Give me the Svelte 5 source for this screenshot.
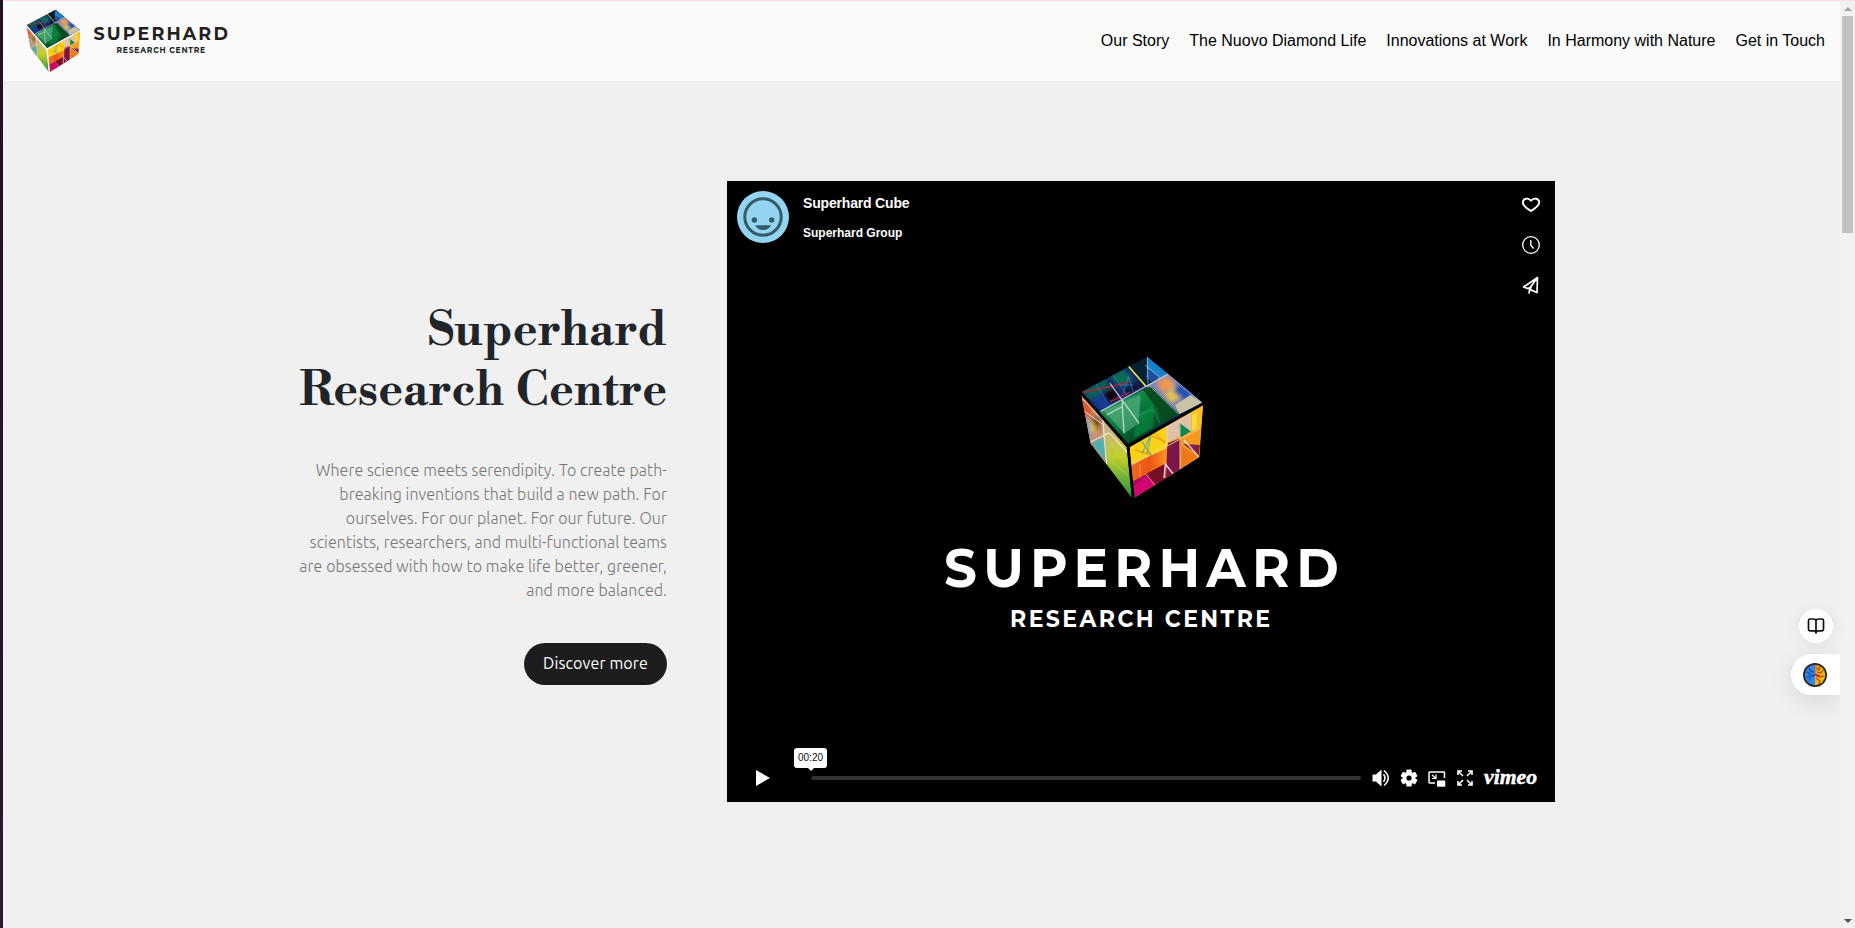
<script>
  const links = ['Our Story', 'The Nuovo Diamond Life', 'Innovations at Work', 'In Harmony with Nature', 'Get in Touch'];
  const heading = ['Superhard', 'Research Centre'];
  const intro = [
    'Where science meets serendipity. To create path-',
    'breaking inventions that build a new path. For',
    'ourselves. For our planet. For our future. Our',
    'scientists, researchers, and multi-functional teams',
    'are obsessed with how to make life better, greener,',
    'and more balanced.'
  ];
</script>

{#snippet cube(id, edge)}
  <defs>
    <clipPath id="{id}-top"><path d="M262 50 428 188 204 312 64 156Z" /></clipPath>
    <clipPath id="{id}-left"><path d="M64 164 200 322 216 474 92 310Z" /></clipPath>
    <clipPath id="{id}-right"><path d="M209 322 429 195 418 352 222 474Z" /></clipPath>
    <filter id="{id}-soft" x="-20%" y="-20%" width="140%" height="140%"><feGaussianBlur stdDeviation="6" /></filter>
    <linearGradient id="{id}-green" x1="0" y1="0" x2="1" y2="1">
      <stop offset="0" stop-color="#3f9c6c" /><stop offset=".45" stop-color="#067a3a" /><stop offset=".75" stop-color="#04401d" /><stop offset="1" stop-color="#0c5429" />
    </linearGradient>
    <linearGradient id="{id}-lf" x1="0" y1="0" x2="0" y2="1">
      <stop offset="0" stop-color="#d5b9a8" /><stop offset=".35" stop-color="#c7b38a" /><stop offset=".6" stop-color="#c4cf2a" /><stop offset="1" stop-color="#159447" />
    </linearGradient>
    <linearGradient id="{id}-or" x1="0" y1="0" x2="1" y2="0">
      <stop offset="0" stop-color="#f06a22" /><stop offset=".5" stop-color="#ee5413" /><stop offset="1" stop-color="#fb9c22" />
    </linearGradient>
  </defs>
  <path d="M262 46 432 188 421 355 220 479 89 312 60 156Z" fill={edge} />
  <g clip-path="url(#{id}-top)">
    <path d="M60 40h380v290H60z" fill="#142c6c" />
    <g filter="url(#{id}-soft)">
      <path d="M60 155 130 112 160 150 90 180Z" fill="#0e5c57" />
      <path d="M100 185 140 145 190 175 130 215Z" fill="#123d9a" />
      <path d="M125 160 160 140 180 180 145 190Z" fill="#120606" />
      <path d="M150 110 190 85 220 120 180 140Z" fill="#0c6c55" />
      <path d="M190 150 240 120 262 140 205 165Z" fill="#0a1238" />
    </g>
    <path d="M66 158 205 128M150 185l60-28" stroke="#c0202b" stroke-width="5" opacity=".75" />
    <path d="M105 125l35 60M160 105l40 60M190 160l15-50 15 45M180 135h40" stroke="#4a89c8" stroke-width="3" fill="none" opacity=".6" />
    <path d="M205 78 262 50 328 102 257 138Z" fill="#06202f" />
    <path d="M262 50 328 102 295 120 260 90Z" fill="#1680cb" />
    <path d="M262 85 300 112 275 126 258 112Z" fill="#1b4ea0" />
    <path d="M257 138 328 102 430 188 358 222Z" fill="#7f83bd" />
    <g filter="url(#{id}-soft)">
      <path d="M290 125 325 108 345 135 305 160Z" fill="#ef9a4d" />
      <path d="M312 165 350 130 365 170 335 190Z" fill="#e7c44c" />
      <path d="M350 130 400 165 375 182 340 155Z" fill="#1d4db0" />
    </g>
    <path d="M345 195 392 165 425 188 358 222Z" fill="#c9c4a1" />
    <path d="M118 215 272 138 358 222 204 312Z" fill="url(#{id}-green)" />
    <path d="M250 150 275 140 345 212 315 240Z" fill="#064c1f" />
    <path d="M132 212 242 164 236 252 192 280Z" fill="#86cda6" opacity=".42" />
    <path d="M186 183 240 165 236 246Z" fill="#3fa070" opacity=".6" />
    <path d="M235 225 280 190 280 262 220 295Z" fill="#0a9447" opacity=".55" />
    <path d="M232 228 280 208 300 250" fill="none" stroke="#45a06c" stroke-width="2" />
    <path d="M205 78 257 138" stroke="#f2e83c" stroke-width="5" />
    <path d="M150 130 237 250M122 214 325 102M192 280 186 180M140 225l45-24" stroke="#e8efe6" stroke-width="4" fill="none" opacity=".75" />
    <path d="M262 50 264 130M255 75 300 112M325 102 425 188M270 138 355 222" stroke="#aacbe0" stroke-width="3" fill="none" opacity=".7" />
  </g>
  <g clip-path="url(#{id}-left)">
    <path d="M60 150h170v330H60z" fill="url(#{id}-lf)" />
    <path d="M64 160 125 230 138 372 88 310Z" fill="#c9926f" />
    <g filter="url(#{id}-soft)">
      <path d="M64 165 95 200 90 235 70 225Z" fill="#e0522b" />
      <path d="M80 240 115 245 105 275 82 270Z" fill="#f1be35" />
      <path d="M90 225 120 240 115 275 100 250Z" fill="#46301f" />
      <path d="M70 230 90 250 92 300 78 290Z" fill="#6f9bd0" />
      <path d="M95 310 130 290 140 375Z" fill="#3fb3bb" />
    </g>
    <path d="M70 178l48 52M75 215l50 36" stroke="#fbdcc2" stroke-width="3" />
    <path d="M92 306 148 278M128 235 140 372M150 280l52 58" stroke="#f8eee0" stroke-width="4" opacity=".8" />
    <path d="M138 350l70 60M140 290l60 90" stroke="#e9d33e" stroke-width="2" opacity=".8" />
  </g>
  <g clip-path="url(#{id}-right)">
    <path d="M205 190h230v290H205z" fill="#f8a72b" />
    <path d="M209 322 320 258 326 330 210 378Z" fill="#fad219" />
    <path d="M318 260 392 216 396 270 322 308Z" fill="#dfc1a7" />
    <path d="M392 216 430 194 424 262 396 276Z" fill="#f7bd2b" />
    <path d="M396 225l16-9-2 50-14 7z" fill="#fbdc32" />
    <path d="M212 375 326 322 322 370 216 424Z" fill="url(#{id}-or)" />
    <path d="M322 310 362 295 360 395 318 416Z" fill="#7d1648" />
    <path d="M218 424 318 370 316 420 222 474Z" fill="#a80a5e" />
    <path d="M222 440 252 410 290 435 224 474Z" fill="#d0076f" />
    <path d="M262 400 315 372 312 420 288 433Z" fill="#731028" />
    <path d="M358 248 392 274 360 294Z" fill="#078854" />
    <path d="M362 292 424 262 418 316 362 330Z" fill="#f39a20" />
    <path d="M365 318 418 350 362 388Z" fill="#ed7a1b" />
    <path d="M370 312 420 315 416 348Z" fill="#812040" />
    <path d="M212 376 420 266M360 238V392M322 258v60" stroke="#f4d7ab" stroke-width="3" opacity=".85" />
    <path d="M242 300l35 50M272 290l-12 54M246 342l24-54" stroke="#59a596" stroke-width="4" opacity=".8" />
    <path d="M270 285l45 20M280 275l35 35M225 330l50 15" stroke="#e48a16" stroke-width="3" />
    <path d="M312 414 316 372 342 405M372 300 416 350" stroke="#fcd9e0" stroke-width="4" fill="none" />
    <path d="M255 400l30 36M240 372v40" stroke="#f78b58" stroke-width="3" />
  </g>
  <path d="M64 160 204 318 430 191M204 318 220 476" fill="none" stroke={edge} stroke-width="8" />
{/snippet}

<div class="screen">
  <div class="strip"></div>
  <div class="page">
    <header>
      <svg class="brand" width="260" height="80" viewBox="0 1 260 80" role="img" aria-label="Superhard Research Centre">
        <g transform="translate(14.1 2.35) scale(.147)">{@render cube('mark', '#f4f4ef')}</g>
        <text x="90.5" y="39.700" font-size="18" font-weight="700" letter-spacing="2.200" textLength="136.500" lengthAdjust="spacingAndGlyphs">SUPERHARD</text>
        <text x="113.5" y="52.800" font-size="8" font-weight="700" letter-spacing=".8" textLength="89.5" lengthAdjust="spacingAndGlyphs">RESEARCH CENTRE</text>
      </svg>
      <nav>
        {#each links as link}<a href="#top">{link}</a>{/each}
      </nav>
    </header>

    <main>
      <section class="copy">
        <h1>{#each heading as line}<span>{line}</span>{/each}</h1>
        <p>{#each intro as line}<span>{line}</span>{/each}</p>
        <a class="button" href="#top">Discover more</a>
      </section>

      <section class="player">
        <svg class="poster" width="828" height="621" viewBox="727 181 828 621">
          <g transform="translate(1060 340) scale(.3333)">{@render cube('film', '#000')}</g>
          <text x="944" y="586.7" font-size="54" font-weight="700" letter-spacing="6.500" textLength="401" lengthAdjust="spacingAndGlyphs">SUPERHARD</text>
          <text x="1010" y="626.7" font-size="22.8" font-weight="700" letter-spacing="2.500" textLength="262.500" lengthAdjust="spacingAndGlyphs">RESEARCH CENTRE</text>
        </svg>
        <div class="top">
          <svg class="avatar" width="52" height="52" viewBox="0 0 52 52">
            <circle cx="26" cy="26" r="26" fill="#93d5f1" />
            <circle cx="26" cy="26" r="18.2" fill="none" stroke="#355b6b" stroke-width="3" />
            <circle cx="17.4" cy="29" r="2.7" fill="#355b6b" /><circle cx="34.7" cy="29" r="2.7" fill="#355b6b" />
            <path d="M18.3 34.3H34Q32 39 26 39t-7.7-4.7Z" fill="#355b6b" />
          </svg>
          <div class="titles"><strong>Superhard Cube</strong><span>Superhard Group</span></div>
          <div class="actions">
            <svg viewBox="0 0 20 20"><path d="M10 16C7 14 1.800 11.300 1.800 7.600 1.800 3.300 7.500 2.200 10 5.700 12.500 2.200 18.200 3.300 18.200 7.600 18.200 11.300 13 14 10 16Z" stroke-width="1.9" /></svg>
            <svg viewBox="0 0 20 20"><circle cx="10" cy="10" r="8.3" stroke-width="1.3" /><path d="M9.800 5v5.300l2.800 3.200" stroke-width="1.4" /></svg>
            <svg viewBox="0 0 20 20"><path d="M16.500 2.500 2.600 12l4.600 1.600L10 12l-.8 2.600 6.800 2.900ZM16.500 2.500 9.500 12M9 12.500 8 18.500" stroke-width="1.7" /></svg>
          </div>
        </div>
        <div class="controls">
          <svg class="play" width="14" height="16" viewBox="0 0 14 16"><path d="M0 0 14 8 0 16Z" fill="#fff" /></svg>
          <div class="track"><span class="time">00:20</span></div>
          <svg class="vol" width="18" height="18" viewBox="0 0 18 18"><path d="M.5 5.500H4L9.500.5v17L4 12.500H.5Z" fill="#fff" /><path d="M11.500 5.200q3 3.800 0 7.600M12 1.500q8.500 7.500 0 15" fill="none" stroke="#fff" stroke-width="1.6" /></svg>
          <svg class="gear" width="18" height="18" viewBox="-9 -9 18 18"><g fill="#fff">{#each [0, 60, 120] as turn}<rect x="-2.700" y="-8.400" width="5.400" height="16.800" rx="1" transform="rotate({turn})" />{/each}<circle r="6.300" /></g><circle r="2.600" /></svg>
          <svg class="pip" width="18" height="17" viewBox="0 0 18 17"><path d="M7 13H1.700Q1 13 1 12.300V2.700Q1 2 1.700 2H15.800Q16.500 2 16.500 2.700V8" fill="none" stroke="#fff" stroke-width="1.500" /><path d="M4 5l3.500 3M8 4.500v4H4" fill="none" stroke="#fff" stroke-width="1.200" /><rect x="9" y="10.500" width="8.300" height="6.300" rx="1" fill="#fff" /></svg>
          <svg class="full" width="16" height="16" viewBox="0 0 16 16"><path d="M1 5V1h4M11 1h4v4M15 11v4h-4M5 15H1v-4M1 1l5 5M15 1l-5 5M15 15l-5-5M1 15l5-5" fill="none" stroke="#fff" stroke-width="1.600" /></svg>
          <svg class="vimeo" width="56" height="22"><text x="1" y="17" textLength="53" lengthAdjust="spacingAndGlyphs">vimeo</text></svg>
        </div>
      </section>
    </main>

    <aside>
      <div class="reader"><svg width="18" height="18" viewBox="0 0 18 18"><path d="M9 3.800Q8.500 2 6.500 2H3Q1.500 2 1.500 3.500V12.500Q1.500 13.800 3 13.800H7Q9 13.800 9 16 9 13.800 11 13.800H15Q16.500 13.800 16.500 12.500V3.500Q16.500 2 15 2H11.500Q9.500 2 9 3.800ZV15.500" fill="none" stroke="#111" stroke-width="1.700" stroke-linejoin="round" /></svg></div>
      <div class="brain">
        <svg width="24" height="24" viewBox="0 0 24 24">
          <circle cx="12" cy="12" r="12" fill="#2b2623" />
          <path d="M12 1.800a10.200 10.200 0 0 0 0 20.400Z" fill="#2f86ee" /><path d="M12 1.800a10.200 10.200 0 0 1 0 20.400Z" fill="#f6b80e" />
          <path d="M3 9q4 0 4 3-3 3-4 2M6 5q1 4 5 4M11 13q-4 0-5 5M8 12h4" fill="none" stroke="#1550b0" stroke-width="1.200" />
          <path d="M13 4l3 3 1-4M12 12l5 2 4-1M14 9l4 1 2-3M13 15l4 3-1 3" fill="none" stroke="#a54b08" stroke-width="1.200" />
          <path d="M12 10l6 3-2 1-4-1Z" fill="#dc2818" />
          <path d="M12 2v8l2-2V2Z" fill="#ee7c13" />
        </svg>
      </div>
    </aside>
  </div>
  <div class="scrollbar"><i class="up"></i><b></b><i class="down"></i></div>
</div>

<style>
  :global(body) { margin: 0; overflow: hidden; background: #f0f0f0; }
  .screen { display: flex; box-sizing: border-box; width: 1855px; height: 928px; font-family: "Liberation Sans", Arial, sans-serif; }
  .strip { width: 3px; background: linear-gradient(#211225, #2c1730); }
  .page { position: relative; width: 1837px; border-top: 1px solid #f3dce3; box-sizing: border-box; }
  header { display: flex; align-items: center; justify-content: space-between; height: 80px; padding: 0 15px 0 9px; background: #fafafa; box-sizing: border-box; }
  .brand { margin-left: -9px; overflow: visible; font-family: Montserrat, Lato, sans-serif; fill: #231f20; }
  nav { display: flex; gap: 20px; }
  nav a { color: #000; font-size: 16px; text-decoration: none; line-height: 24px; white-space: nowrap; }
  main { display: flex; gap: 60px; padding: 100px 0 0 264px; }
  .copy { display: flex; flex-direction: column; align-items: flex-end; width: 400px; padding-top: 120px; box-sizing: border-box; }
  h1, p { display: flex; flex-direction: column; align-items: flex-end; margin: 0; white-space: nowrap; }
  h1 { font: 700 46.6px/60px "Libre Bodoni", "Liberation Serif", serif; word-spacing: 4px; color: #212529; }
  p { margin-top: 37px; font: 300 16px/24px Ubuntu, "Open Sans", sans-serif; letter-spacing: .085px; color: #767676; }
  .button { display: flex; align-items: center; justify-content: center; box-sizing: border-box; width: 143px; height: 42px; padding-bottom: 2px; margin-top: 41px; border-radius: 21px; background: #1d1d1d; color: #fff; font: 400 16px Ubuntu, "Noto Sans", sans-serif; letter-spacing: .14px; text-decoration: none; white-space: nowrap; }
  .player { position: relative; display: flex; flex-direction: column; justify-content: space-between; width: 828px; height: 621px; background: #000; color: #fff; }
  .poster { position: absolute; inset: 0; font-family: Montserrat, Lato, sans-serif; fill: #fff; }
  .top { display: flex; position: relative; padding: 10px 14px 0 10px; }
  .titles { display: flex; flex-direction: column; margin-left: 14px; font-weight: 700; }
  .titles strong { font-size: 14px; line-height: 24px; letter-spacing: -.18px; }
  .titles span { margin-top: 6px; font-size: 12px; line-height: 24px; }
  .actions { display: flex; flex-direction: column; gap: 20px; margin: 3.500px 0 0 auto; }
  .actions svg { width: 20px; height: 20px; fill: none; stroke: #fff; stroke-linejoin: round; }
  .controls { position: relative; display: flex; align-items: center; height: 48px; padding: 0 16px 0 29px; }
  .controls svg { flex: none; }
  .track { position: relative; width: 550px; height: 4px; margin: 0 11px 0 41px; border-radius: 2px; background: #333; }
  .time { position: absolute; left: -17px; bottom: 12px; width: 33px; height: 20px; border-radius: 3px; background: #fff; color: #111; font-size: 10px; line-height: 19px; text-align: center; }
  .time::after { content: ""; position: absolute; left: 14px; top: 20px; border: 3px solid transparent; border-top-color: #fff; border-bottom: 0; }
  .gear { margin-left: 10px; }
  .pip { margin-left: 10px; }
  .full { margin-left: 11px; }
  .vimeo { margin-left: 10px; fill: #fff; stroke: #fff; stroke-width: .5px; font: italic 700 22px "Liberation Serif", serif; overflow: visible; }
  aside { position: absolute; right: 0; top: 608px; display: flex; flex-direction: column; align-items: flex-end; gap: 11px; }
  .reader { display: flex; align-items: center; justify-content: center; width: 34px; height: 34px; margin-right: 7px; border-radius: 50%; background: #fff; box-shadow: 0 2px 16px rgba(0, 0, 0, .07); }
  .brain { display: flex; align-items: center; box-sizing: border-box; width: 49px; height: 41px; padding-left: 12px; border-radius: 21px 0 0 21px; background: #fff; box-shadow: 0 6px 24px rgba(0, 0, 0, .1); clip-path: inset(-40px 0 -40px -40px); }
  .scrollbar { display: flex; flex-direction: column; align-items: center; width: 15px; height: 928px; background: #f1f1f1; border-top: 1px solid #f3dce3; box-sizing: border-box; }
  .scrollbar i { border: 4px solid transparent; }
  .scrollbar .up { margin-top: 6px; border-top: 0; border-bottom-color: #a3a3a3; }
  .scrollbar b { width: 11px; height: 217px; margin-top: 5px; background: #c1c1c1; }
  .scrollbar .down { margin: auto 0 5px; border-bottom: 0; border-top-color: #505050; }
</style>
